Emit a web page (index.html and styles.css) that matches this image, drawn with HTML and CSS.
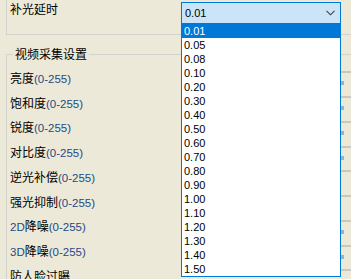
FILE: index.html
```html
<!DOCTYPE html>
<html lang="zh-CN">
<head>
    <meta charset="UTF-8">
    <title>视频采集设置</title>
    <link rel="stylesheet" href="styles.css">
</head>
<body>
    <div class="group-top">
        <div class="top-row">
            <span class="name">补光延时</span>
            <div class="combo">
                <span class="combo-text">0.01</span>
                <svg class="chevron" width="9" height="6" viewBox="0 0 9 6"><polyline points="0.5,0.8 4.5,4.8 8.5,0.8" fill="none" stroke="#404040" stroke-width="1.1"/></svg>
                <div class="list" id="list"></div>
            </div>
        </div>
    </div>
    <fieldset class="group">
        <legend>视频采集设置</legend>
        <div id="rows"></div>
    </fieldset>
    <script>
        const values = ["0.01","0.05","0.08","0.10","0.20","0.30","0.40","0.50","0.60","0.70","0.80","0.90","1.00","1.10","1.20","1.30","1.40","1.50"];
        const list = document.getElementById("list");
        values.forEach(function (v, i) {
            let item = document.createElement("div");
            item.className = i === 0 ? "item selected" : "item";
            item.innerText = v;
            list.appendChild(item);
        });

        const rows = [
            ["亮度", "(0-255)", true],
            ["饱和度", "(0-255)", true],
            ["锐度", "(0-255)", true],
            ["对比度", "(0-255)", true],
            ["逆光补偿", "(0-255)", false],
            ["强光抑制", "(0-255)", false],
            ["2D降噪", "(0-255)", true],
            ["3D降噪", "(0-255)", true],
            ["防人脸过曝", "", false]
        ];
        const rowBox = document.getElementById("rows");
        rows.forEach(function (r) {
            let row = document.createElement("div");
            row.className = "row";
            let name = document.createElement("span");
            name.className = "name";
            let label = r[0].replace(/^(\dD)/, '<span class="latin">$1</span>');
            name.innerHTML = label + (r[1] ? '<span class="latin">' + r[1] + '</span>' : '');
            let ctrl = document.createElement("div");
            ctrl.className = "ctrl";
            if (r[2]) {
                let knob = document.createElement("i");
                knob.className = "knob";
                ctrl.appendChild(knob);
            }
            row.appendChild(name);
            row.appendChild(ctrl);
            rowBox.appendChild(row);
        });
    </script>
</body>
</html>
```

FILE: styles.css
```css
html, body {
    margin: 0;
    padding: 0;
}
body {
    width: 351px;
    height: 279px;
    overflow: hidden;
    background: #ece9d8;
    font-family: "Noto Sans CJK SC", "Liberation Sans", sans-serif;
    font-size: 12px;
    color: #000;
}
.group-top {
    margin-left: 6px;
    width: 400px;
    height: 34px;
    border-left: 1px solid #d3d3cb;
    border-bottom: 1px solid #d3d3cb;
}
.top-row {
    display: flex;
    align-items: flex-start;
    padding-left: 3px;
}
.name {
    width: 171px;
    flex: none;
    line-height: 18px;
    white-space: nowrap;
}
.latin {
    font-family: "Liberation Sans", sans-serif;
    font-size: 11.5px;
    color: #1d4a85;
}
.combo {
    position: relative;
    margin-top: 2px;
    width: 160px;
    height: 22px;
    box-sizing: border-box;
    border: 1px solid #0078d7;
    background: #cce4f7;
    display: flex;
    align-items: center;
    justify-content: space-between;
    padding: 0 5px 0 3px;
}
.combo-text,
.item {
    font-family: "Liberation Sans", sans-serif;
    font-size: 11px;
}
.chevron {
    display: block;
}
.list {
    position: absolute;
    top: 21px;
    left: -1px;
    width: 160px;
    box-sizing: border-box;
    border: 1px solid #0078d7;
    border-top: none;
    background: #fff;
    z-index: 5;
}
.item {
    height: 14px;
    line-height: 14px;
    padding-left: 2px;
}
.item.selected {
    background: #0078d7;
    color: #fff;
}
.group {
    margin: 12px 0 0 6px;
    width: 400px;
    padding: 0 0 0 3px;
    border: 1px solid #d3d3cb;
    border-right: none;
    border-bottom: none;
}
.group legend {
    margin-left: 3px;
    padding: 0 2px;
    line-height: 14px;
}
#rows {
    padding-top: 5px;
}
.row {
    display: flex;
    align-items: center;
    height: 24.75px;
}
.ctrl {
    width: 180px;
    height: 12px;
    border-top: 2px solid #c8c8c0;
}
.knob {
    display: block;
    margin: 8px 0 0 160px;
    width: 3px;
    height: 4px;
    background: #8fb3da;
}
```
